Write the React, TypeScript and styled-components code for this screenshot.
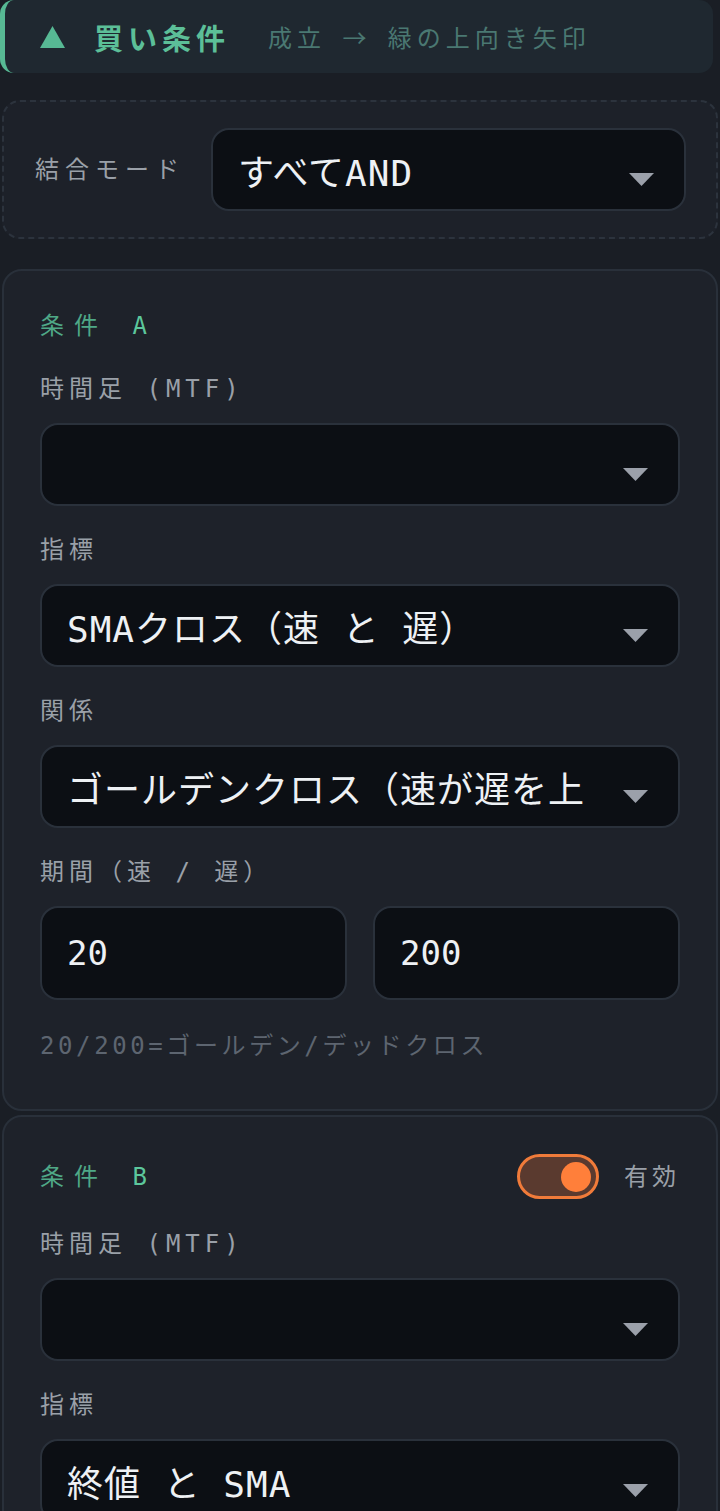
import React from 'react';
import styled, { createGlobalStyle } from 'styled-components';

const GlobalStyle = createGlobalStyle`
  html, body {
    margin: 0;
    padding: 0;
    background: #1a1e25;
  }
  body {
    font-family: "DejaVu Sans Mono", "Noto Sans CJK JP", monospace;
  }
`;

const Page = styled.div`
  min-height: 1511px;
  padding: 0 2px;
  background: #1a1e25;
  display: flex;
  flex-direction: column;
  overflow: hidden;
`;

const Header = styled.div`
  height: 73px;
  margin: 0 5px 0 -2px;
  box-sizing: border-box;
  border-left: 5px solid #57b994;
  border-radius: 14px;
  background: #1f2830;
  display: flex;
  align-items: center;
  padding-left: 35px;
`;

const HeaderTitle = styled.span`
  margin-left: 29px;
  font-size: 29px;
  font-weight: 700;
  letter-spacing: 5px;
  color: #5cbf98;
`;

const HeaderNote = styled.span`
  margin-left: 38px;
  font-family: "Noto Sans CJK JP", sans-serif;
  font-size: 24px;
  letter-spacing: 5px;
  word-spacing: 6px;
  color: #4a7872;
`;

const CombineBox = styled.div`
  margin-top: 27px;
  border: 2px dashed #2c333d;
  border-radius: 18px;
  background: #1d2129;
  padding: 26px 30px 26px 31px;
  display: flex;
  align-items: center;
  gap: 26px;
`;

const Label = styled.div<{ $spacing?: number }>`
  font-size: 24px;
  line-height: 36px;
  letter-spacing: ${(p) => p.$spacing ?? 5}px;
  color: #9aa0a8;
  white-space: nowrap;
`;

const SelectBox = styled.div<{ $grow?: boolean }>`
  ${(p) => (p.$grow ? 'flex: 1;' : '')}
  height: 83px;
  box-sizing: border-box;
  border: 2px solid #2a313b;
  border-radius: 18px;
  background: #0c0f14;
  display: flex;
  align-items: center;
  padding: 0 30px 0 25px;
`;

const SelectValue = styled.span`
  flex: 1;
  min-width: 0;
  overflow: hidden;
  white-space: pre;
  font-size: 36px;
  letter-spacing: 1px;
  color: #eef1f4;
`;

const Caret = () => (
  <svg width="25" height="13" viewBox="0 0 25 13" style={{ marginTop: 20, flex: 'none' }}>
    <path d="M0 0H25L12.5 13Z" fill="#9ba0aa" />
  </svg>
);

const Card = styled.div<{ $gap: number }>`
  margin-top: ${(p) => p.$gap}px;
  border: 2px solid #29303a;
  border-radius: 20px;
  background: #1e222a;
  padding: 37px 36px 45px 36px;
  display: flex;
  flex-direction: column;
`;

const CardTitleRow = styled.div`
  min-height: 36px;
  margin-bottom: 27px;
  display: flex;
  align-items: center;
  justify-content: space-between;
`;

const CardTitle = styled.span`
  font-size: 24px;
  line-height: 36px;
  letter-spacing: 10px;
  color: #4fa887;

  b {
    font-weight: 400;
    color: #5cc79c;
  }
`;

const Field = styled.div`
  display: flex;
  flex-direction: column;
  gap: 16px;
  margin-bottom: 26px;
`;

const InputRow = styled.div`
  display: grid;
  grid-template-columns: 1fr 1fr;
  gap: 26px;
`;

const NumberBox = styled.div`
  height: 94px;
  box-sizing: border-box;
  border: 2px solid #2a313b;
  border-radius: 18px;
  background: #0c0f14;
  display: flex;
  align-items: center;
  padding-left: 25px;
  font-size: 34px;
  color: #eef1f4;
`;

const Help = styled.div`
  margin-top: 2px;
  font-size: 24px;
  line-height: 36px;
  letter-spacing: 3.6px;
  color: #5d6570;
`;

const EnableGroup = styled.div`
  display: flex;
  align-items: center;
  gap: 25px;
`;

const Toggle = styled.div<{ $on: boolean }>`
  width: 82px;
  height: 45px;
  box-sizing: border-box;
  border: 3px solid #f07b3a;
  border-radius: 999px;
  background: #5a3a2f;
  display: flex;
  align-items: center;
  justify-content: ${(p) => (p.$on ? 'flex-end' : 'flex-start')};
  padding: 0 5px;

  &::after {
    content: '';
    width: 30px;
    height: 30px;
    border-radius: 50%;
    background: #ff7f3a;
  }
`;

const Select = ({ value }: { value: string }) => (
  <SelectBox>
    <SelectValue>{value}</SelectValue>
    <Caret />
  </SelectBox>
);

const App = () => {
  return (
    <Page>
      <GlobalStyle />
      <Header>
        <svg width="25" height="22" viewBox="0 0 25 22">
          <path d="M12.5 0L25 22H0Z" fill="#57b994" />
        </svg>
        <HeaderTitle>買い条件</HeaderTitle>
        <HeaderNote>成立 → 緑の上向き矢印</HeaderNote>
      </Header>

      <CombineBox>
        <Label $spacing={6}>結合モード</Label>
        <SelectBox $grow>
          <SelectValue>すべてAND</SelectValue>
          <Caret />
        </SelectBox>
      </CombineBox>

      <Card $gap={30}>
        <CardTitleRow>
          <CardTitle>
            条件 <b>A</b>
          </CardTitle>
        </CardTitleRow>
        <Field>
          <Label>時間足 (MTF)</Label>
          <Select value="" />
        </Field>
        <Field>
          <Label>指標</Label>
          <Select value="SMAクロス（速 と 遅）" />
        </Field>
        <Field>
          <Label>関係</Label>
          <Select value="ゴールデンクロス（速が遅を上" />
        </Field>
        <Field>
          <Label>期間（速 / 遅）</Label>
          <InputRow>
            <NumberBox>20</NumberBox>
            <NumberBox>200</NumberBox>
          </InputRow>
        </Field>
        <Help>20/200=ゴールデン/デッドクロス</Help>
      </Card>

      <Card $gap={4}>
        <CardTitleRow>
          <CardTitle>
            条件 <b>B</b>
          </CardTitle>
          <EnableGroup>
            <Toggle $on />
            <Label $spacing={4}>有効</Label>
          </EnableGroup>
        </CardTitleRow>
        <Field>
          <Label>時間足 (MTF)</Label>
          <Select value="" />
        </Field>
        <Field>
          <Label>指標</Label>
          <Select value="終値 と SMA" />
        </Field>
      </Card>
    </Page>
  );
};

export default App;
